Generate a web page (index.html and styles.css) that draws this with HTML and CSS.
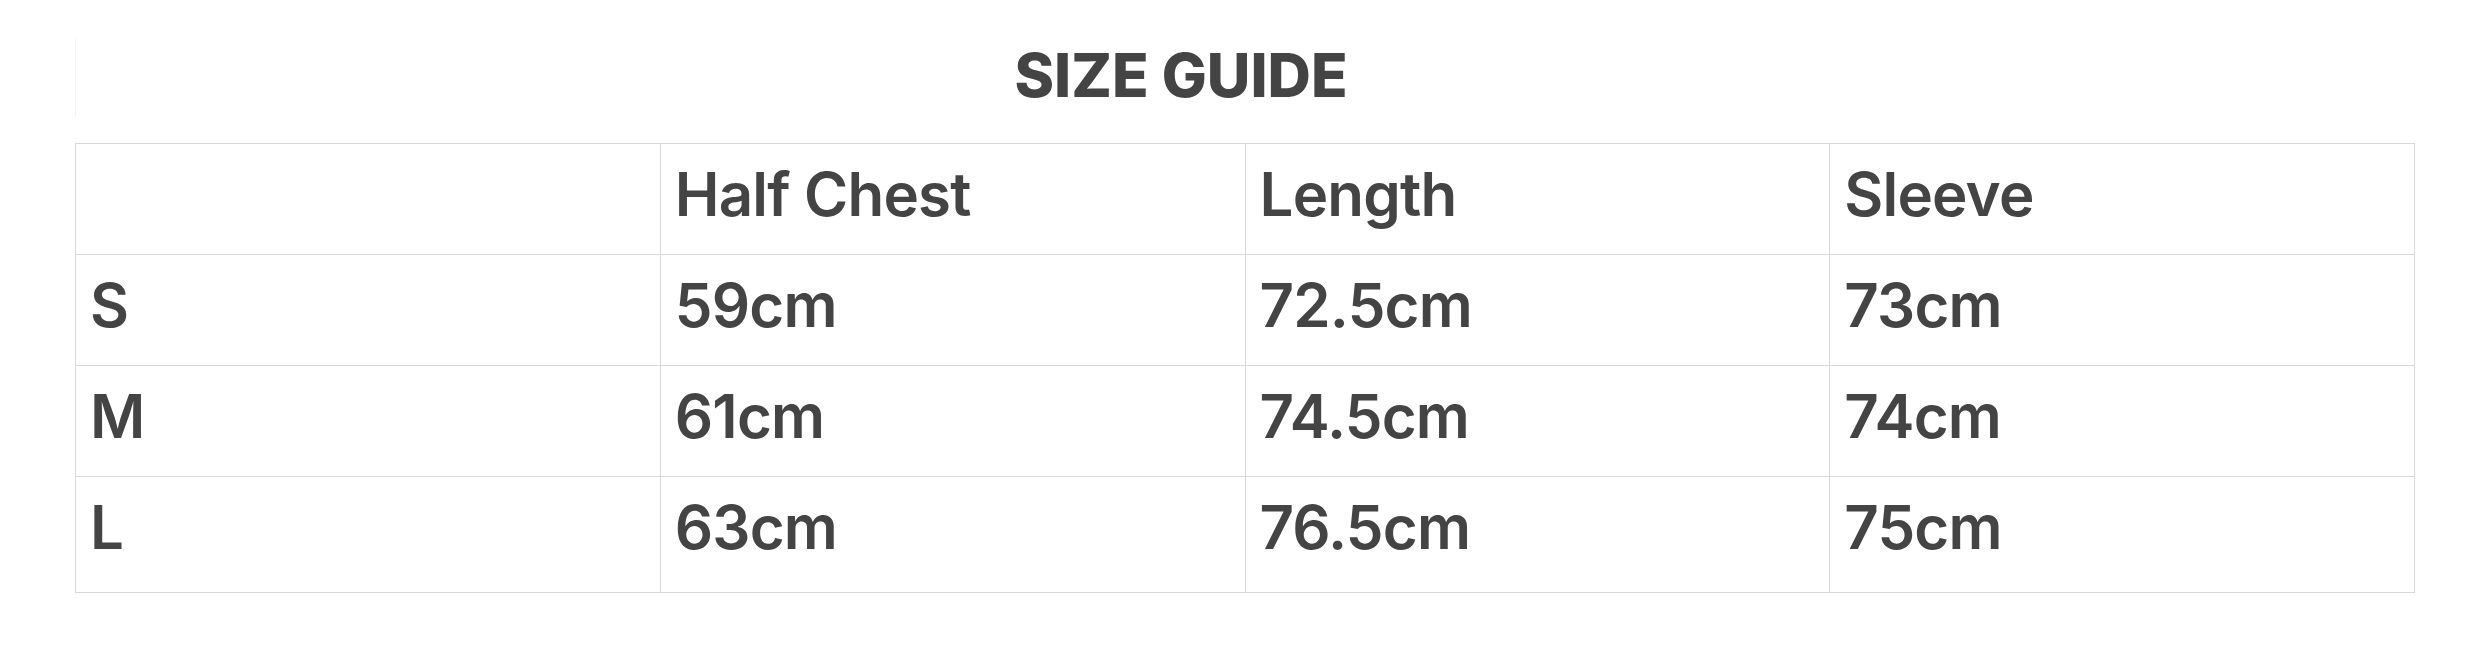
FILE: index.html
```html
<!DOCTYPE html>
<html lang="en">
<head>
<meta charset="utf-8">
<title>Size Guide</title>
<link rel="stylesheet" href="styles.css">
</head>
<body>
<div class="page">
  <div class="guide-header">
    <h2 class="guide-title">SIZE GUIDE</h2>
  </div>
  <table class="size-table">
    <thead>
      <tr>
        <th></th>
        <th>Half Chest</th>
        <th>Length</th>
        <th>Sleeve</th>
      </tr>
    </thead>
    <tbody>
      <tr>
        <td>S</td>
        <td>59cm</td>
        <td>72.5cm</td>
        <td>73cm</td>
      </tr>
      <tr>
        <td>M</td>
        <td>61cm</td>
        <td>74.5cm</td>
        <td>74cm</td>
      </tr>
      <tr class="last-row">
        <td>L</td>
        <td>63cm</td>
        <td>76.5cm</td>
        <td>75cm</td>
      </tr>
    </tbody>
  </table>
</div>
</body>
</html>
```

FILE: styles.css
```css
html, body {
  margin: 0;
  padding: 0;
  background: #ffffff;
}

body {
  font-family: "Inter", "Liberation Sans", sans-serif;
  color: #444444;
}

.page {
  padding: 39px 68px 0 75px;
}

.guide-header {
  height: 78px;
  border-left: 1px solid #f3f3f3;
  padding-right: 129px;
  text-align: center;
}

.guide-title {
  margin: 0;
  font-size: 60px;
  line-height: 72px;
  font-weight: 800;
  color: #444444;
}

.size-table {
  margin-top: 26px;
  width: 2340px;
  border-collapse: collapse;
  table-layout: fixed;
  border: 1px solid #d8d8d8;
}

.size-table th,
.size-table td {
  width: 25%;
  border: 1px solid #d8d8d8;
  padding: 14px 13px 24px 14px;
  font-size: 60px;
  line-height: 72px;
  font-weight: 600;
  letter-spacing: -0.8px;
  text-align: left;
  vertical-align: top;
  color: #444444;
}

.size-table .last-row td {
  padding-bottom: 29px;
}
```
